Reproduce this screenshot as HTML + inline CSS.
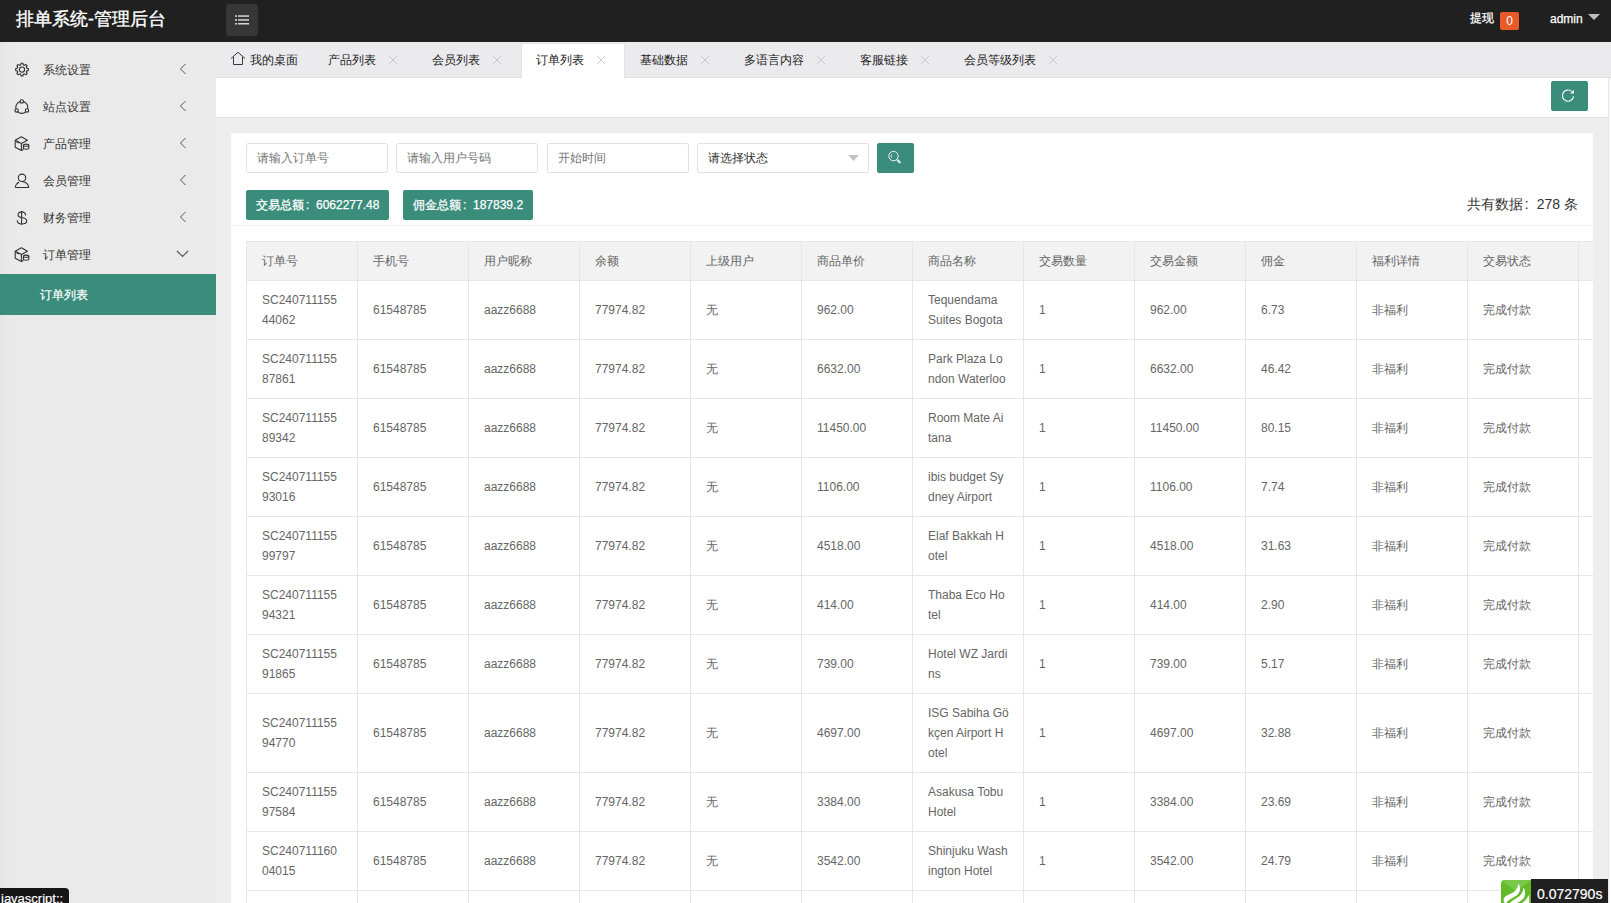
<!DOCTYPE html>
<html><head><meta charset="utf-8">
<style>
*{box-sizing:border-box;margin:0;padding:0}
html,body{width:1611px;height:903px;overflow:hidden}
body{font-family:"Liberation Sans",sans-serif;font-size:12px;color:#333;background:#eeeeee;position:relative}
.abs{position:absolute}
#hdr{left:0;top:0;width:1611px;height:42px;background:#202020}
#logo{left:16px;top:0;height:42px;line-height:38px;font-size:18px;-webkit-text-stroke:0.35px #fff;color:#fff;white-space:nowrap}
#tgl{left:226px;top:4px;width:32px;height:32px;border-radius:3px;background:#373737}
#side{left:0;top:42px;width:216px;height:861px;background:linear-gradient(90deg,#e4e4e4 0px,#e7e7e7 3px,#e9e9e9 8px,#eaeaea 13px)}
.nav{position:absolute;left:0;width:216px;height:37px}
.nav .t{position:absolute;left:43px;top:0;line-height:37px;font-size:12px;color:#333;white-space:nowrap}
.nav svg{position:absolute}
#tabs{left:216px;top:42px;width:1395px;height:36px;background:#ebeaed;border-bottom:1px solid #e0e0e0}
.tab{position:absolute;top:11px;font-size:12px;color:#222;white-space:nowrap;line-height:14px}
.tabx{position:absolute;top:14px}
#acttab{left:305px;top:1px;width:104px;height:35px;background:#fff;border:1px solid #e4e4e4;border-bottom:none}
#tool{left:216px;top:78px;width:1392px;height:40px;background:#fff;border-bottom:1px solid #e2e2e2}
#rline{left:1608px;top:78px;width:1px;height:825px;background:#e4e4e4}
#rlight{left:1609px;top:78px;width:2px;height:825px;background:#fafafa}
#refresh{left:1551px;top:81px;width:37px;height:30px;background:#3a8c7b;border-radius:2px}
#card{left:231px;top:133px;width:1362px;height:800px;background:#fff;border-radius:2px;overflow:hidden}
.inp{position:absolute;top:10px;height:30px;width:142px;border:1px solid #e2e2e2;border-radius:2px;background:#fff;color:#757575;font-size:12px;line-height:28px;padding-left:10px;white-space:nowrap}
.btn{position:absolute;height:30px;background:#3a8c7b;border-radius:2px;color:#fff;-webkit-text-stroke:0.25px #fff;font-size:12px;line-height:30px;padding:0 10px;white-space:nowrap}
.col{display:inline-block;width:12px;padding-left:2px}
.col2{display:inline-block;width:14px;padding-left:2px}
#sep{left:0;top:92px;width:1362px;height:1px;background:#f0f0f0}
#tblwrap{left:15px;top:108px}
table{border-collapse:collapse;table-layout:fixed;width:1444px;font-size:12px;color:#666}
td,th{border:1px solid #e6e6e6;padding:9px 15px;text-align:left;font-weight:normal;vertical-align:middle}
th{background:#f2f2f2;}
td .c,th .c{line-height:20px;white-space:nowrap}
#tip{left:0;top:888px;width:69px;height:20px;background:#161616;border-radius:0 4px 0 0;color:#fff;font-size:13px;line-height:18px;padding-left:1px;padding-top:1.5px;-webkit-text-stroke:0.2px #fff;white-space:nowrap}
#trace{left:1531px;top:879px;width:77px;height:24px;background:#202020;color:#fff;-webkit-text-stroke:0.2px #fff;font-size:14px;line-height:20px;padding-left:6px;padding-top:5px;white-space:nowrap}
#traceico{left:1501px;top:880px;width:30px;height:23px;background:#64bb28;border-radius:4px 0 0 0;overflow:hidden}
</style></head><body>
<div id="hdr" class="abs">
  <div id="logo" class="abs">排单系统-管理后台</div>
  <div id="tgl" class="abs">
    <svg width="32" height="32" style="position:absolute;left:0;top:0">
      <g fill="#d8d8d8"><rect x="9" y="11.3" width="2" height="1.5"/><rect x="12" y="11.3" width="11" height="1.5"/><rect x="9" y="15.2" width="2" height="1.5"/><rect x="12" y="15.2" width="11" height="1.5"/><rect x="9" y="19" width="2" height="1.5"/><rect x="12" y="19" width="11" height="1.5"/></g>
    </svg>
  </div>
  <div class="abs" style="left:1470px;top:11px;font-size:12px;color:#fff;-webkit-text-stroke:0.25px #fff;line-height:14px">提现</div>
  <div class="abs" style="left:1500px;top:12px;width:19px;height:18px;background:#e85a27;border-radius:2px;color:#fff;font-size:12px;line-height:18px;text-align:center">0</div>
  <div class="abs" style="left:1550px;top:12px;font-size:12px;color:#fff;-webkit-text-stroke:0.25px #fff;line-height:14px">admin</div>
  <svg class="abs" style="left:1588px;top:14px" width="12" height="6"><path d="M0 0H12L6 6Z" fill="#bdbdbd"/></svg>
</div>

<div id="side" class="abs">
<div class="nav" style="top:10px"><svg width="16" height="16" viewBox="0 0 16 16" style="left:14px;top:10px"><g fill="none" stroke="#333" stroke-width="1.1" stroke-linejoin="round"><path d="M6.71 2.87 L7.00 1.28 L9.00 1.28 L9.29 2.87 L10.43 3.34 L11.76 2.42 L13.18 3.84 L12.26 5.17 L12.73 6.31 L14.32 6.60 L14.32 8.60 L12.73 8.89 L12.26 10.03 L13.18 11.36 L11.76 12.78 L10.43 11.86 L9.29 12.33 L9.00 13.92 L7.00 13.92 L6.71 12.33 L5.57 11.86 L4.24 12.78 L2.82 11.36 L3.74 10.03 L3.27 8.89 L1.68 8.60 L1.68 6.60 L3.27 6.31 L3.74 5.17 L2.82 3.84 L4.24 2.42 L5.57 3.34Z"/><circle cx="8" cy="7.6" r="2.6"/></g></svg><span class="t">系统设置</span><svg width="8" height="12" style="left:179px;top:11px"><path d="M6.5 1L1.5 6L6.5 11" fill="none" stroke="#555" stroke-width="1"/></svg></div>
<div class="nav" style="top:47px"><svg width="16" height="16" viewBox="0 0 16 16" style="left:14px;top:10px"><g fill="#eaeaea" stroke="#333" stroke-width="1.1"><circle cx="7.80" cy="8.40" r="6.00" fill="none"/><circle cx="7.80" cy="2.40" r="1.7"/><circle cx="2.60" cy="11.40" r="1.7"/><circle cx="13.00" cy="11.40" r="1.7"/></g></svg><span class="t">站点设置</span><svg width="8" height="12" style="left:179px;top:11px"><path d="M6.5 1L1.5 6L6.5 11" fill="none" stroke="#555" stroke-width="1"/></svg></div>
<div class="nav" style="top:84px"><svg width="16" height="16" viewBox="0 0 16 16" style="left:14px;top:10px"><g fill="none" stroke="#333" stroke-width="1.1" stroke-linejoin="round"><path d="M1.2 4.2L7.4 0.8L13.4 4.2L7.4 7.4Z"/><path d="M1.2 4.2V11.2L7.4 14.6V7.4"/><path d="M7.4 14.6L9.4 13.5"/><path d="M2.6 5.6L4.8 6.9" stroke-width="1.5"/><path d="M9.4 9.2V12.1C9.4 12.8 10.6 13.2 12.1 13.2S14.8 12.8 14.8 12.1V9.2" fill="#eaeaea"/><ellipse cx="12.1" cy="9.2" rx="2.7" ry="1.1" fill="#eaeaea"/></g></svg><span class="t">产品管理</span><svg width="8" height="12" style="left:179px;top:11px"><path d="M6.5 1L1.5 6L6.5 11" fill="none" stroke="#555" stroke-width="1"/></svg></div>
<div class="nav" style="top:121px"><svg width="16" height="16" viewBox="0 0 16 16" style="left:14px;top:10px"><g fill="none" stroke="#333" stroke-width="1.1" stroke-linejoin="round"><circle cx="8" cy="4.8" r="3.7"/><path d="M1.3 14.5H14.7C14.4 11.6 12.2 9.1 8.2 8.5"/><path d="M1.3 14.5C1.6 12 3.1 10.2 5.2 9.1"/></g></svg><span class="t">会员管理</span><svg width="8" height="12" style="left:179px;top:11px"><path d="M6.5 1L1.5 6L6.5 11" fill="none" stroke="#555" stroke-width="1"/></svg></div>
<div class="nav" style="top:158px"><svg width="16" height="16" viewBox="0 0 16 16" style="left:14px;top:10px"><g fill="none" stroke="#333" stroke-width="1.1"><path d="M11.6 5.4C11.6 3.1 9.8 1.9 7.6 1.9C5.4 1.9 4 3.1 4 4.9C4 6.8 6 7.2 7.6 7.5C10.2 7.9 12.7 8.5 12.7 11C12.7 13 10.6 14 7.6 14C5.1 14 3.2 12.6 3.2 10.3"/><path d="M7.6 0.9V14.7"/></g></svg><span class="t">财务管理</span><svg width="8" height="12" style="left:179px;top:11px"><path d="M6.5 1L1.5 6L6.5 11" fill="none" stroke="#555" stroke-width="1"/></svg></div>
<div class="nav" style="top:195px"><svg width="16" height="16" viewBox="0 0 16 16" style="left:14px;top:10px"><g fill="none" stroke="#333" stroke-width="1.1" stroke-linejoin="round"><path d="M1.2 4.2L7.4 0.8L13.4 4.2L7.4 7.4Z"/><path d="M1.2 4.2V11.2L7.4 14.6V7.4"/><path d="M7.4 14.6L9.4 13.5"/><path d="M2.6 5.6L4.8 6.9" stroke-width="1.5"/><path d="M9.4 9.2V12.1C9.4 12.8 10.6 13.2 12.1 13.2S14.8 12.8 14.8 12.1V9.2" fill="#eaeaea"/><ellipse cx="12.1" cy="9.2" rx="2.7" ry="1.1" fill="#eaeaea"/></g></svg><span class="t">订单管理</span><svg width="13" height="8" style="left:176px;top:13px"><path d="M1 1L6.5 6.5L12 1" fill="none" stroke="#555" stroke-width="1.1"/></svg></div>
<div class="abs" style="left:0;top:232px;width:216px;height:41px;background:#3a8c7b"><span class="abs" style="left:40px;top:0;line-height:41px;top:1px;color:#fff;-webkit-text-stroke:0.2px #fff;font-size:12px;white-space:nowrap">订单列表</span></div>
</div>

<div id="tabs" class="abs">
<div id="acttab" class="abs"></div>
<svg class="abs" style="left:14px;top:9px" width="16" height="15"><path d="M1 7.5L8 1.3 15 7.5M3.5 6V13.5H12.5V6" fill="none" stroke="#3a3a3a" stroke-width="1"/></svg>
<span class="tab" style="left:34px">我的桌面</span>
<span class="tab" style="left:112px">产品列表</span>
<svg class="tabx" style="left:173px" width="8" height="8"><path d="M0 0L8 8M8 0L0 8" stroke="#c8c8c8" stroke-width="0.9"/></svg>
<span class="tab" style="left:216px">会员列表</span>
<svg class="tabx" style="left:277px" width="8" height="8"><path d="M0 0L8 8M8 0L0 8" stroke="#c8c8c8" stroke-width="0.9"/></svg>
<span class="tab" style="left:320px">订单列表</span>
<svg class="tabx" style="left:381px" width="8" height="8"><path d="M0 0L8 8M8 0L0 8" stroke="#c8c8c8" stroke-width="0.9"/></svg>
<span class="tab" style="left:424px">基础数据</span>
<svg class="tabx" style="left:485px" width="8" height="8"><path d="M0 0L8 8M8 0L0 8" stroke="#c8c8c8" stroke-width="0.9"/></svg>
<span class="tab" style="left:528px">多语言内容</span>
<svg class="tabx" style="left:601px" width="8" height="8"><path d="M0 0L8 8M8 0L0 8" stroke="#c8c8c8" stroke-width="0.9"/></svg>
<span class="tab" style="left:644px">客服链接</span>
<svg class="tabx" style="left:705px" width="8" height="8"><path d="M0 0L8 8M8 0L0 8" stroke="#c8c8c8" stroke-width="0.9"/></svg>
<span class="tab" style="left:748px">会员等级列表</span>
<svg class="tabx" style="left:833px" width="8" height="8"><path d="M0 0L8 8M8 0L0 8" stroke="#c8c8c8" stroke-width="0.9"/></svg>
</div>

<div id="tool" class="abs">
  <div id="refresh" class="abs" style="left:1335px;top:3px"><svg width="37" height="30" style="position:absolute;left:0;top:0"><path d="M22.6 15.2A5.6 5.6 0 1 1 20.7 10.4" fill="none" stroke="#fff" stroke-width="1.1"/><path d="M22.9 8.8V12.6H19.1Z" fill="#fff"/></svg></div>
</div>
<div id="rline" class="abs"></div>
<div id="rlight" class="abs"></div>

<div id="card" class="abs">
  <div class="inp" style="left:15px">请输入订单号</div>
  <div class="inp" style="left:165px">请输入用户号码</div>
  <div class="inp" style="left:316px">开始时间</div>
  <div class="inp" style="left:466px;width:172px;color:#333">请选择状态
    <svg style="position:absolute;left:150px;top:11px" width="11" height="6"><path d="M0 0H11L5.5 6Z" fill="#c2c2c2"/></svg>
  </div>
  <div class="btn" style="left:646px;top:10px;width:37px;padding:0">
    <svg width="37" height="30" style="position:absolute;left:0;top:0"><g fill="none" stroke="#f0f5f3" stroke-width="1"><circle cx="16.5" cy="13.1" r="4.7"/><path d="M14.6 11.3Q13.4 13 14.6 14.9" stroke-width="0.8"/><path d="M20.2 16.8L23.4 20" stroke-width="2.2" stroke="#dfeae6"/></g></svg>
  </div>
  <div class="btn" style="left:15px;top:57px;width:143px">交易总额<span class="col">:</span>6062277.48</div>
  <div class="btn" style="left:172px;top:57px;width:130px">佣金总额<span class="col">:</span>187839.2</div>
  <div class="abs" style="right:15px;top:61px;font-size:14px;color:#333;line-height:20px;white-space:nowrap">共有数据<span class="col2">:</span>278 条</div>
  <div id="sep" class="abs"></div>
  <div id="tblwrap" class="abs">
    <table><colgroup><col style="width:111px"><col style="width:111px"><col style="width:111px"><col style="width:111px"><col style="width:111px"><col style="width:111px"><col style="width:111px"><col style="width:111px"><col style="width:111px"><col style="width:111px"><col style="width:111px"><col style="width:111px"><col style="width:111px"></colgroup>
      <thead><tr><th><div class=c>订单号</div></th><th><div class=c>手机号</div></th><th><div class=c>用户昵称</div></th><th><div class=c>余额</div></th><th><div class=c>上级用户</div></th><th><div class=c>商品单价</div></th><th><div class=c>商品名称</div></th><th><div class=c>交易数量</div></th><th><div class=c>交易金额</div></th><th><div class=c>佣金</div></th><th><div class=c>福利详情</div></th><th><div class=c>交易状态</div></th><th><div class=c></div></th></tr></thead>
      <tbody><tr><td><div class=c>SC240711155<br>44062</div></td><td><div class=c>61548785</div></td><td><div class=c>aazz6688</div></td><td><div class=c>77974.82</div></td><td><div class=c>无</div></td><td><div class=c>962.00</div></td><td><div class=c>Tequendama<br>Suites Bogota</div></td><td><div class=c>1</div></td><td><div class=c>962.00</div></td><td><div class=c>6.73</div></td><td><div class=c>非福利</div></td><td><div class=c>完成付款</div></td><td><div class=c></div></td></tr>
<tr><td><div class=c>SC240711155<br>87861</div></td><td><div class=c>61548785</div></td><td><div class=c>aazz6688</div></td><td><div class=c>77974.82</div></td><td><div class=c>无</div></td><td><div class=c>6632.00</div></td><td><div class=c>Park Plaza Lo<br>ndon Waterloo</div></td><td><div class=c>1</div></td><td><div class=c>6632.00</div></td><td><div class=c>46.42</div></td><td><div class=c>非福利</div></td><td><div class=c>完成付款</div></td><td><div class=c></div></td></tr>
<tr><td><div class=c>SC240711155<br>89342</div></td><td><div class=c>61548785</div></td><td><div class=c>aazz6688</div></td><td><div class=c>77974.82</div></td><td><div class=c>无</div></td><td><div class=c>11450.00</div></td><td><div class=c>Room Mate Ai<br>tana</div></td><td><div class=c>1</div></td><td><div class=c>11450.00</div></td><td><div class=c>80.15</div></td><td><div class=c>非福利</div></td><td><div class=c>完成付款</div></td><td><div class=c></div></td></tr>
<tr><td><div class=c>SC240711155<br>93016</div></td><td><div class=c>61548785</div></td><td><div class=c>aazz6688</div></td><td><div class=c>77974.82</div></td><td><div class=c>无</div></td><td><div class=c>1106.00</div></td><td><div class=c>ibis budget Sy<br>dney Airport</div></td><td><div class=c>1</div></td><td><div class=c>1106.00</div></td><td><div class=c>7.74</div></td><td><div class=c>非福利</div></td><td><div class=c>完成付款</div></td><td><div class=c></div></td></tr>
<tr><td><div class=c>SC240711155<br>99797</div></td><td><div class=c>61548785</div></td><td><div class=c>aazz6688</div></td><td><div class=c>77974.82</div></td><td><div class=c>无</div></td><td><div class=c>4518.00</div></td><td><div class=c>Elaf Bakkah H<br>otel</div></td><td><div class=c>1</div></td><td><div class=c>4518.00</div></td><td><div class=c>31.63</div></td><td><div class=c>非福利</div></td><td><div class=c>完成付款</div></td><td><div class=c></div></td></tr>
<tr><td><div class=c>SC240711155<br>94321</div></td><td><div class=c>61548785</div></td><td><div class=c>aazz6688</div></td><td><div class=c>77974.82</div></td><td><div class=c>无</div></td><td><div class=c>414.00</div></td><td><div class=c>Thaba Eco Ho<br>tel</div></td><td><div class=c>1</div></td><td><div class=c>414.00</div></td><td><div class=c>2.90</div></td><td><div class=c>非福利</div></td><td><div class=c>完成付款</div></td><td><div class=c></div></td></tr>
<tr><td><div class=c>SC240711155<br>91865</div></td><td><div class=c>61548785</div></td><td><div class=c>aazz6688</div></td><td><div class=c>77974.82</div></td><td><div class=c>无</div></td><td><div class=c>739.00</div></td><td><div class=c>Hotel WZ Jardi<br>ns</div></td><td><div class=c>1</div></td><td><div class=c>739.00</div></td><td><div class=c>5.17</div></td><td><div class=c>非福利</div></td><td><div class=c>完成付款</div></td><td><div class=c></div></td></tr>
<tr><td><div class=c>SC240711155<br>94770</div></td><td><div class=c>61548785</div></td><td><div class=c>aazz6688</div></td><td><div class=c>77974.82</div></td><td><div class=c>无</div></td><td><div class=c>4697.00</div></td><td><div class=c>ISG Sabiha Gö<br>kçen Airport H<br>otel</div></td><td><div class=c>1</div></td><td><div class=c>4697.00</div></td><td><div class=c>32.88</div></td><td><div class=c>非福利</div></td><td><div class=c>完成付款</div></td><td><div class=c></div></td></tr>
<tr><td><div class=c>SC240711155<br>97584</div></td><td><div class=c>61548785</div></td><td><div class=c>aazz6688</div></td><td><div class=c>77974.82</div></td><td><div class=c>无</div></td><td><div class=c>3384.00</div></td><td><div class=c>Asakusa Tobu<br>Hotel</div></td><td><div class=c>1</div></td><td><div class=c>3384.00</div></td><td><div class=c>23.69</div></td><td><div class=c>非福利</div></td><td><div class=c>完成付款</div></td><td><div class=c></div></td></tr>
<tr><td><div class=c>SC240711160<br>04015</div></td><td><div class=c>61548785</div></td><td><div class=c>aazz6688</div></td><td><div class=c>77974.82</div></td><td><div class=c>无</div></td><td><div class=c>3542.00</div></td><td><div class=c>Shinjuku Wash<br>ington Hotel</div></td><td><div class=c>1</div></td><td><div class=c>3542.00</div></td><td><div class=c>24.79</div></td><td><div class=c>非福利</div></td><td><div class=c>完成付款</div></td><td><div class=c></div></td></tr>
<tr><td><div class=c>SC240711160<br>04016</div></td><td><div class=c>61548785</div></td><td><div class=c>aazz6688</div></td><td><div class=c>77974.82</div></td><td><div class=c>无</div></td><td><div class=c>3542.00</div></td><td><div class=c>Shinjuku Wash<br>ington Hotel</div></td><td><div class=c>1</div></td><td><div class=c>3542.00</div></td><td><div class=c>24.79</div></td><td><div class=c>非福利</div></td><td><div class=c>完成付款</div></td><td><div class=c></div></td></tr></tbody>
    </table>
  </div>
</div>

<div id="tip" class="abs">javascript:;</div>
<div id="traceico" class="abs"><svg width="30" height="23" style="position:absolute;left:0;top:0"><path d="M0 0H30L15.5 11.5Z" fill="#79c84b"/><g fill="#fff"><path d="M3.5 23C1.5 19 3 16.5 8 14.5C13.5 12.3 16.8 9 17.5 3.5C19.5 7 19.8 11.5 16.5 14.8C13.5 17.5 8 19 5.5 23Z"/><path d="M9 23C11 20.5 14.5 19 18 16.5C21 14 22 11 22.6 7.5C24.5 11 25 15.5 22 19C20 21 17.5 22 16 23Z"/><path d="M21 23C24 21 26 19 27.5 15C28.5 17.5 28.8 20.5 28 23Z"/></g></svg></div>
<div id="trace" class="abs">0.072790s</div>
</body></html>
